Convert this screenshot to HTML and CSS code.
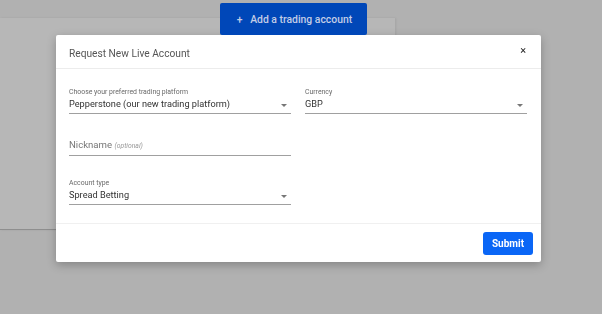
FILE: index.html
```html
<!DOCTYPE html>
<html lang="en">
<head>
  <meta charset="UTF-8">
  <title>Request New Live Account</title>
  <link rel="stylesheet" href="styles.css">
</head>
<body>

<div class="page">
  <div class="toolbar">
    <button class="add-btn"><span class="plus">+</span> Add a trading account</button>
  </div>
  <div class="card"></div>
</div>

<!-- Modal -->
<div class="modal">
  <div class="modal-header">
    <span class="modal-title">Request New Live Account</span>
    <span class="close">&times;</span>
  </div>

  <div class="modal-body">
    <div class="row">
      <div class="field select">
        <div class="label">Choose your preferred trading platform</div>
        <div class="value">Pepperstone (our new trading platform)</div>
        <span class="caret"></span>
      </div>
      <div class="field select">
        <div class="label">Currency</div>
        <div class="value">GBP</div>
        <span class="caret"></span>
      </div>
    </div>

    <div class="row nick-row">
      <div class="field">
        <div class="label"></div>
        <div class="value placeholder">Nickname <i>(optional)</i></div>
      </div>
    </div>

    <div class="row">
      <div class="field select">
        <div class="label">Account type</div>
        <div class="value">Spread Betting</div>
        <span class="caret"></span>
      </div>
    </div>
  </div>

  <div class="modal-footer">
    <button class="submit">Submit</button>
  </div>
</div>

</body>
</html>
```

FILE: styles.css
```css
body {
  margin: 0;
  background: #b1b1b1;
  font-family: Roboto, 'Liberation Sans', sans-serif;
  height: 314px;
  overflow: hidden;
}
.toolbar {
  padding-top: 3px;
  padding-left: 220px;
}
.add-btn {
  position: relative;
  z-index: 1;
  width: 147px;
  height: 32px;
  border: none;
  border-radius: 2px;
  background: #0047b8;
  color: #c3cde6;
  font-family: Roboto, sans-serif;
  font-size: 10.4px;
  font-weight: 500;
  padding: 0 0 0 2px;
}
.add-btn .plus {
  margin-right: 5px;
}
.card {
  margin-top: -17px;
  width: 395px;
  height: 211px;
  background: #b7b7b7;
  border-bottom: 1px solid #8e8e8e;
  box-shadow: 1px 0 2px rgba(0,0,0,0.08);
}

.modal {
  position: fixed;
  left: 56px;
  top: 35px;
  width: 485px;
  height: 227px;
  background: #fff;
  border-radius: 2px;
  box-shadow: 0 3px 10px rgba(0,0,0,0.25);
}
.modal-header {
  height: 33px;
  padding: 0 15px 0 13px;
  display: flex;
  align-items: center;
  justify-content: space-between;
  border-bottom: 1px solid #ececec;
}
.modal-title {
  font-size: 10.2px;
  color: #555;
  margin-top: 3px;
}
.close {
  font-size: 11px;
  color: #222;
  margin-top: -2px;
}
.modal-body {
  padding: 18px 14px 18px 13px;
  border-bottom: 1px solid #f0f0f0;
}
.row {
  display: grid;
  grid-template-columns: 222px 222px;
  column-gap: 14px;
  margin-bottom: 14px;
}
.row:last-child {
  margin-bottom: 0;
}
.nick-row {
  margin-bottom: 22px;
}
.field {
  position: relative;
  border-bottom: 1px solid #a0a0a0;
  padding-bottom: 2px;
}
.label {
  font-size: 6.9px;
  line-height: 10px;
  height: 10px;
  color: #6a6a6a;
}
.value {
  font-size: 9.2px;
  line-height: 14px;
  color: #333;
}
.placeholder {
  font-size: 9.6px;
  color: #777;
}
.placeholder i {
  font-size: 6.8px;
  color: #999;
}
.caret {
  position: absolute;
  right: 4px;
  bottom: 6px;
  width: 0;
  height: 0;
  border-left: 3px solid transparent;
  border-right: 3px solid transparent;
  border-top: 3px solid #777;
}
.modal-footer {
  display: flex;
  justify-content: flex-end;
  padding: 8px 8px 0 0;
}
.submit {
  width: 50px;
  height: 23px;
  border: none;
  border-radius: 3px;
  background: #0a66f6;
  color: #fff;
  font-family: Roboto, sans-serif;
  font-size: 10px;
  font-weight: bold;
  padding: 0;
}
```
